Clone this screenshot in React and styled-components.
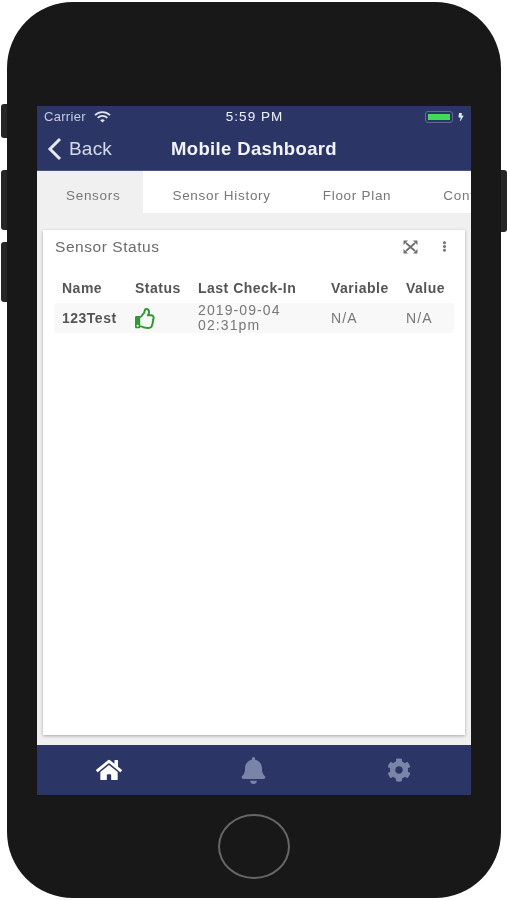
import React from "react";
import styled, { createGlobalStyle } from "styled-components";
import { FaBell, FaBolt, FaCog, FaEllipsisV, FaHome, FaRegThumbsUp } from "react-icons/fa";

const GlobalStyle = createGlobalStyle`
  html, body {
    margin: 0;
    padding: 0;
    background: #fff;
    font-family: "Liberation Sans", Arial, sans-serif;
    overflow: hidden;
  }
`;

function WifiIcon() {
  return (
    <svg width="17" height="12" viewBox="0 0 17 12" fill="none" stroke="#dfe3f0" strokeWidth="1.9">
      <path d="M1 4.2a10.6 10.6 0 0 1 15 0" />
      <path d="M3.7 6.9a6.8 6.8 0 0 1 9.6 0" />
      <path d="M8.5 11.6L6.2 9.3a3.3 3.3 0 0 1 4.6 0z" fill="#dfe3f0" stroke="none" />
    </svg>
  );
}

function ExpandIcon() {
  return (
    <svg width="15" height="14" viewBox="0 0 15 14" fill="none">
      <path d="M3 3l9 8M12 3l-9 8" stroke="#6f6f6f" strokeWidth="1.8" />
      <path d="M0.5 0.5h4.5l-4.5 4.5zM14.5 0.5h-4.5l4.5 4.5zM0.5 13.5h4.5l-4.5-4.5zM14.5 13.5h-4.5l4.5-4.5z" fill="#6f6f6f" />
    </svg>
  );
}

function App() {
  return (
    <Page>
      <GlobalStyle />
      <Phone>
        <SideButton $side="left" $top={102} $height={34} />
        <SideButton $side="left" $top={168} $height={60} />
        <SideButton $side="left" $top={240} $height={60} />
        <SideButton $side="right" $top={168} $height={62} />
        <Screen>
          <StatusBar>
            <Carrier>
              Carrier <WifiIcon />
            </Carrier>
            <Clock>5:59 PM</Clock>
            <BatteryWrap>
              <Battery>
                <BatteryFill />
              </Battery>
              <FaBolt size={8} />
            </BatteryWrap>
          </StatusBar>
          <NavBar>
            <BackLink>
              <svg width="15" height="24" viewBox="0 0 15 24" fill="none">
                <path d="M13 2L3 12l10 10" stroke="#e6e9f4" strokeWidth="3" />
              </svg>
              Back
            </BackLink>
            <NavTitle>Mobile Dashboard</NavTitle>
          </NavBar>
          <Tabs>
            <Tab $active>Sensors</Tab>
            <Tab>Sensor History</Tab>
            <Tab>Floor Plan</Tab>
            <Tab>Configuration</Tab>
          </Tabs>
          <Content>
            <Card>
              <CardHeader>
                <CardTitle>Sensor Status</CardTitle>
                <CardActions>
                  <ExpandIcon />
                  <FaEllipsisV size={11} color="#777" />
                </CardActions>
              </CardHeader>
              <HeadRow>
                <span>Name</span>
                <span>Status</span>
                <span>Last Check-In</span>
                <span>Variable</span>
                <span>Value</span>
              </HeadRow>
              <DataRow>
                <NameCell>123Test</NameCell>
                <FaRegThumbsUp size={21} color="#2f9a2f" />
                <span>2019-09-04<br />02:31pm</span>
                <span>N/A</span>
                <span>N/A</span>
              </DataRow>
            </Card>
          </Content>
          <BottomBar>
            <BottomItem $active><FaHome size={26} /></BottomItem>
            <BottomItem><FaBell size={27} /></BottomItem>
            <BottomItem><FaCog size={24} /></BottomItem>
          </BottomBar>
        </Screen>
        <HomeButton />
      </Phone>
    </Page>
  );
}

export default App;

const Page = styled.div`
  width: 507px;
  height: 900px;
  padding: 2px 6px 0 7px;
  box-sizing: border-box;
`;

const Phone = styled.div`
  position: relative;
  height: 896px;
  padding-top: 104px;
  box-sizing: border-box;
  background: #181818;
  border-radius: 66px;
  display: flex;
  flex-direction: column;
  align-items: center;
`;

const SideButton = styled.div`
  position: absolute;
  top: ${(p) => p.$top}px;
  ${(p) => (p.$side === "left" ? "left: -6px;" : "right: -6px;")}
  width: 6px;
  height: ${(p) => p.$height}px;
  background: #262626;
  border-radius: ${(p) => (p.$side === "left" ? "3px 0 0 3px" : "0 3px 3px 0")};
`;

const Screen = styled.div`
  width: 434px;
  height: 689px;
  display: flex;
  flex-direction: column;
  background: #f0f0f0;
  overflow: hidden;
  filter: blur(0.5px);
`;

const StatusBar = styled.div`
  height: 21px;
  flex-shrink: 0;
  display: grid;
  grid-template-columns: 1fr auto 1fr;
  align-items: center;
  padding: 0 6px 0 7px;
  background: #2c3666;
  color: #c5cbe0;
  font-size: 13px;
  letter-spacing: 0.3px;
`;

const Carrier = styled.div`
  display: flex;
  align-items: center;
  gap: 8px;
`;

const Clock = styled.div`
  color: #f0f2f9;
  font-size: 13.5px;
  letter-spacing: 1px;
`;

const BatteryWrap = styled.div`
  justify-self: end;
  display: flex;
  align-items: center;
  gap: 4px;
  color: #e6e9f4;
`;

const Battery = styled.div`
  width: 28px;
  height: 12px;
  padding: 2px;
  box-sizing: border-box;
  border: 1px solid #5f6a8e;
  border-radius: 3px;
`;

const BatteryFill = styled.div`
  height: 100%;
  background: #3fdc58;
`;

const NavBar = styled.div`
  height: 44px;
  flex-shrink: 0;
  display: grid;
  grid-template-columns: 1fr auto 1fr;
  align-items: center;
  padding: 0 10px;
  background: #2c3666;
  border-bottom: 1px solid #4c5580;
  box-sizing: border-box;
`;

const BackLink = styled.div`
  display: flex;
  align-items: center;
  gap: 7px;
  color: #d5daea;
  font-size: 19px;
  letter-spacing: 0.2px;
`;

const NavTitle = styled.div`
  color: #f2f4fa;
  font-size: 18.5px;
  font-weight: 700;
  letter-spacing: 0.35px;
`;

const Tabs = styled.div`
  height: 42px;
  flex-shrink: 0;
  display: flex;
  background: #fff;
  overflow: hidden;
`;

const Tab = styled.div`
  flex: 0 0 auto;
  display: flex;
  align-items: center;
  padding: 6px 23px 0 29px;
  white-space: nowrap;
  color: #777;
  font-size: 13.5px;
  letter-spacing: 0.7px;
  background: ${(p) => (p.$active ? "#f0f0f0" : "#fff")};
`;

const Content = styled.div`
  flex: 1;
  min-height: 0;
  display: flex;
  padding: 17px 6px 10px;
`;

const Card = styled.div`
  flex: 1;
  padding: 0 12px;
  background: #fff;
  box-shadow: 0 1px 3px rgba(0, 0, 0, 0.3);
`;

const CardHeader = styled.div`
  height: 32px;
  display: flex;
  align-items: center;
  justify-content: space-between;
  padding: 1px 3px 0 0;
  box-sizing: border-box;
`;

const CardTitle = styled.div`
  color: #6b6b6b;
  font-size: 15.5px;
  letter-spacing: 0.55px;
`;

const CardActions = styled.div`
  display: flex;
  align-items: center;
  gap: 21px;
`;

const columns = "73px 63px 133px 75px 1fr";

const HeadRow = styled.div`
  display: grid;
  grid-template-columns: ${columns};
  margin-top: 10px;
  padding-left: 7px;
  height: 31px;
  align-items: center;
  color: #555;
  font-size: 14px;
  font-weight: 700;
  letter-spacing: 0.5px;
`;

const DataRow = styled.div`
  display: grid;
  grid-template-columns: ${columns};
  align-items: center;
  height: 30px;
  margin: 0 -1px;
  padding-left: 8px;
  background: #f8f8f8;
  border-radius: 4px;
  color: #777;
  font-size: 14px;
  line-height: 15px;
  letter-spacing: 1.1px;
`;

const NameCell = styled.span`
  color: #555;
  font-size: 14px;
  font-weight: 700;
  letter-spacing: 0.5px;
`;

const BottomBar = styled.div`
  height: 50px;
  flex-shrink: 0;
  display: grid;
  grid-template-columns: repeat(3, 1fr);
  justify-items: center;
  align-items: center;
  background: #2c3666;
`;

const BottomItem = styled.div`
  display: flex;
  color: ${(p) => (p.$active ? "#fff" : "#7a83a8")};
`;

const HomeButton = styled.div`
  width: 72px;
  height: 65px;
  margin-top: 19px;
  box-sizing: border-box;
  border: 2px solid #666;
  border-radius: 50%;
`;
